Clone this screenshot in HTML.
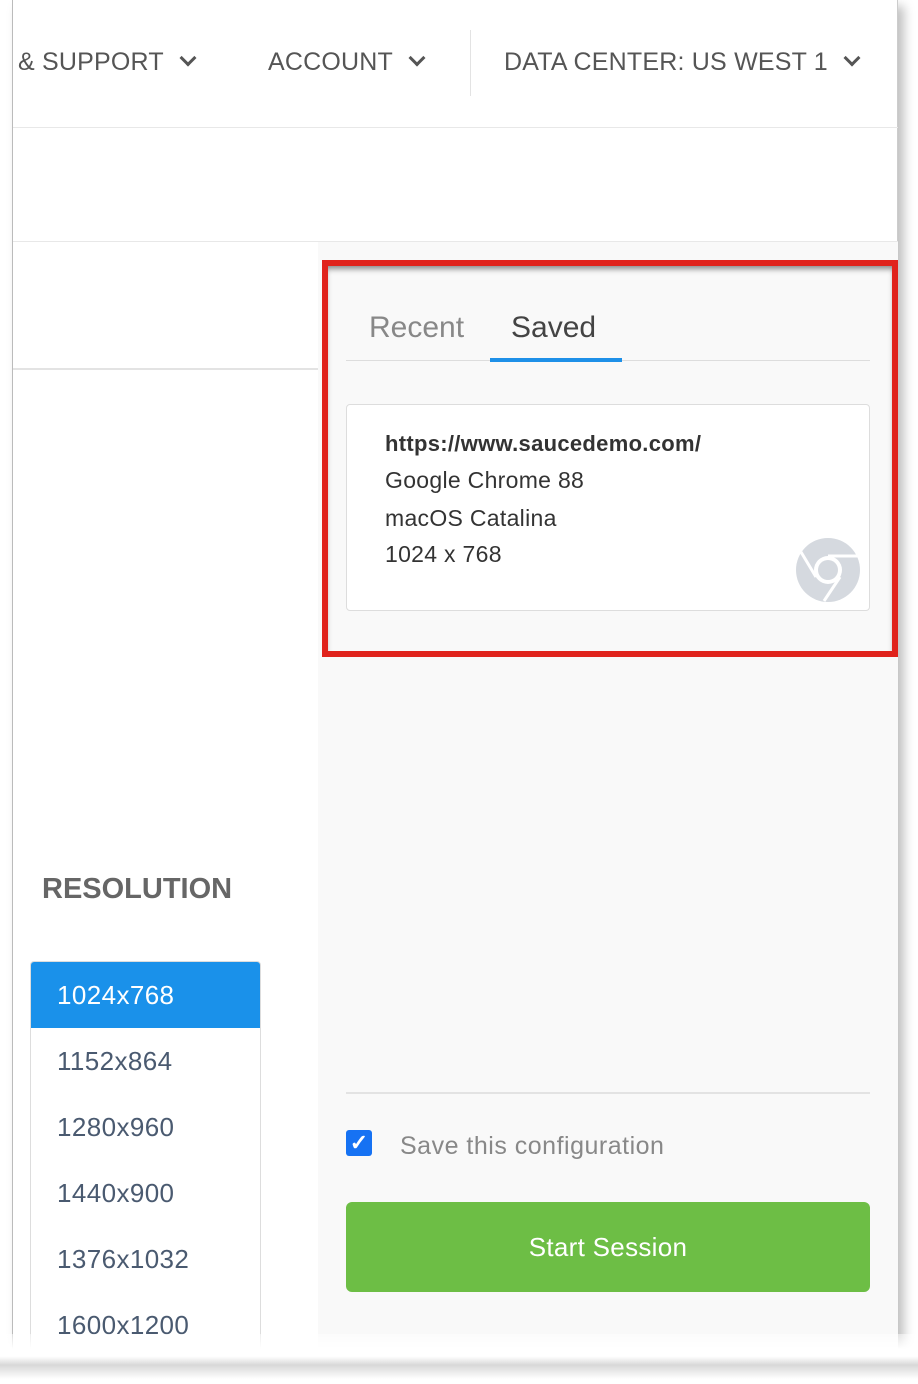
<!DOCTYPE html>
<html><head><meta charset="utf-8"><style>
*{margin:0;padding:0;box-sizing:border-box}
body{width:918px;height:1384px;position:relative;background:#fff;font-family:"Liberation Sans",sans-serif;overflow:hidden}
.a{position:absolute}
.nav{font-size:25px;color:#555;top:48px;letter-spacing:0.2px}
.chev{display:inline-block;width:12px;height:12px;border-right:3px solid #555;border-bottom:3px solid #555;transform:rotate(45deg);margin-left:18px;position:relative;top:-6px}
.res{left:31px;width:229px;height:66px;font-size:26px;letter-spacing:0.4px;color:#4a5a70;padding-left:26px;line-height:66px}
.card div{font-size:23px;color:#333;height:36px;letter-spacing:0.3px}
</style></head><body>
<div class="a" style="left:12px;top:0;width:886px;height:1355px;background:#fff;border-left:1px solid #bbb;border-right:1px solid #ccc;box-shadow:6px 6px 10px rgba(0,0,0,.25)"></div>
<div class="a" style="left:0;top:1355px;width:918px;height:29px;background:#fff"></div>

<div class="a nav" style="left:18px">&amp; SUPPORT<span class="chev"></span></div>
<div class="a nav" style="left:268px">ACCOUNT<span class="chev"></span></div>
<div class="a" style="left:470px;top:30px;width:1px;height:66px;background:#e3e3e3"></div>
<div class="a nav" style="left:504px">DATA CENTER: US WEST 1<span class="chev"></span></div>
<div class="a" style="left:13px;top:127px;width:885px;height:1px;background:#e8e8e8"></div>
<div class="a" style="left:13px;top:241px;width:885px;height:1px;background:#e8e8e8"></div>

<div class="a" style="left:318px;top:242px;width:580px;height:1110px;background:#f9f9f9"></div>
<div class="a" style="left:13px;top:368px;width:305px;height:2px;background:#e3e3e3"></div>

<div class="a" style="left:322px;top:260px;width:576px;height:397px;border:6px solid #e0231c;box-shadow:inset 0 5px 6px -2px rgba(0,0,0,.45)"></div>
<div class="a" style="left:369px;top:311px;font-size:30px;color:#888">Recent</div>
<div class="a" style="left:511px;top:311px;font-size:30px;color:#444">Saved</div>
<div class="a" style="left:346px;top:360px;width:524px;height:1px;background:#ddd"></div>
<div class="a" style="left:490px;top:358px;width:132px;height:4px;background:#1e90e8"></div>
<div class="a card" style="left:346px;top:404px;width:524px;height:207px;background:#fff;border:1px solid #ddd;border-radius:4px;padding:26px 0 0 38px">
<div style="font-weight:bold;color:#333;font-size:22px;letter-spacing:0.3px">https://www.saucedemo.com/</div>
<div style="height:38px">Google Chrome 88</div>
<div>macOS Catalina</div>
<div>1024 x 768</div>
</div>
<svg class="a" style="left:796px;top:538px" width="64" height="64" viewBox="0 0 64 64">
<circle cx="32" cy="32" r="32" fill="#d5d9df"/>
<circle cx="32" cy="32" r="14" fill="#fff"/>
<circle cx="32" cy="32" r="10" fill="#d5d9df"/>
<path d="M32 18 L62 18" stroke="#fff" stroke-width="3"/>
<path d="M20 39 L5 14" stroke="#fff" stroke-width="3"/>
<path d="M44 39 L28 63" stroke="#fff" stroke-width="3"/>
</svg>

<div class="a" style="left:42px;top:873px;font-size:29px;font-weight:bold;color:#666">RESOLUTION</div>
<div class="a" style="left:30px;top:961px;width:231px;height:400px;border:1px solid #ddd;border-radius:4px 4px 0 0"></div>
<div class="a res" style="top:962px;background:#1a91ea;color:#fff;border-radius:3px 3px 0 0">1024x768</div>
<div class="a res" style="top:1028px">1152x864</div>
<div class="a res" style="top:1094px">1280x960</div>
<div class="a res" style="top:1160px">1440x900</div>
<div class="a res" style="top:1226px">1376x1032</div>
<div class="a res" style="top:1292px">1600x1200</div>
<div class="a" style="left:0;top:1334px;width:918px;height:50px;background:linear-gradient(rgba(255,255,255,.5),#fff 30%,#fff 45%,#d8d8d8 62%,#fff 90%)"></div>

<div class="a" style="left:346px;top:1092px;width:524px;height:2px;background:#e3e3e3"></div>
<div class="a" style="left:346px;top:1130px;width:26px;height:26px;background:#1672f3;border-radius:3px;color:#fff;font-size:22px;font-weight:bold;text-align:center;line-height:26px">✓</div>
<div class="a" style="left:400px;top:1132px;font-size:25px;color:#888;letter-spacing:0.5px">Save this configuration</div>
<div class="a" style="left:346px;top:1202px;width:524px;height:90px;background:#6dbe45;border-radius:6px;color:#fff;font-size:26px;letter-spacing:0.3px;text-align:center;line-height:90px">Start Session</div>
</body></html>
